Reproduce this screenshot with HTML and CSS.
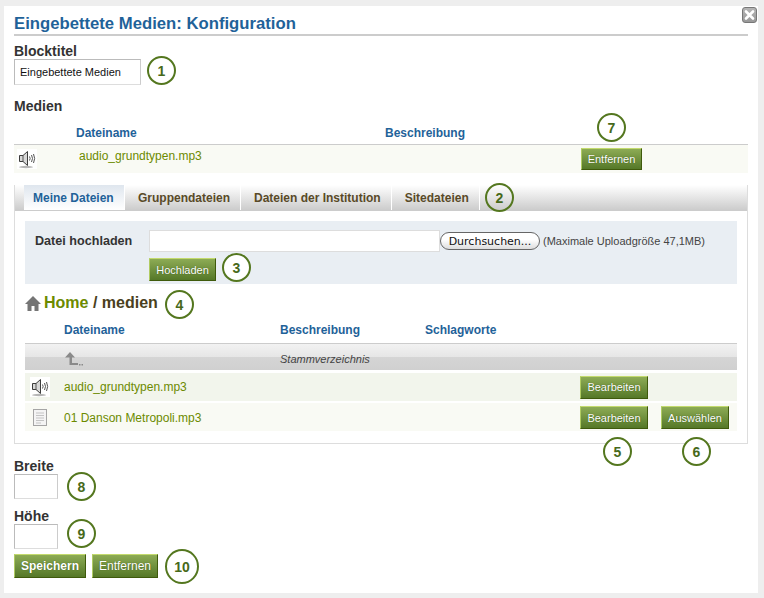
FILE: index.html
```html
<!DOCTYPE html>
<html lang="de">

<head>
	<meta charset="UTF-8" />
	<title>Eingebettete Medien: Konfiguration</title>
	<link rel="stylesheet" href="styles.css">
</head>

<body>
	<div class="panel">
		<a class="close" href="#">
			<svg width="15" height="16" viewBox="0 0 15 16">
				<path d="M4 4.500 11 11.500M11 4.500 4 11.500" stroke="#fff" stroke-width="2.600" stroke-linecap="round" />
			</svg>
		</a>

		<h1>Eingebettete Medien: Konfiguration</h1>

		<label class="fieldLabel labelTitle">Blocktitel</label>
		<input class="textInput titleInput" type="text" value="Eingebettete Medien" />

		<h3 class="mediaHeading">Medien</h3>
		<div class="row headRow selectedHead">
			<span>Dateiname</span>
			<span>Beschreibung</span>
		</div>
		<div class="row selectedRow">
			<svg width="20" height="20" viewBox="0 0 20 20">
				<use href="#speakerIcon" />
			</svg>
			<a class="fileLink" href="#">audio_grundtypen.mp3</a>
			<button class="btn removeBtn" type="button">Entfernen</button>
		</div>

		<div class="browser">
			<ul class="tabs">
				<li class="tab active">Meine Dateien</li>
				<li class="tab">Gruppendateien</li>
				<li class="tab">Dateien der Institution</li>
				<li class="tab">Sitedateien</li>
			</ul>

			<div class="upload">
				<div class="uploadLine">
					<span class="uploadLabel">Datei hochladen</span>
					<input class="fileName" type="text" />
					<button class="browse" type="button">Durchsuchen...</button>
					<span class="maxSize">(Maximale Uploadgröße 47,1MB)</span>
				</div>
				<button class="btn uploadBtn" type="button">Hochladen</button>
			</div>

			<div class="crumbs">
				<svg width="16" height="15" viewBox="0 0 16 15">
					<path d="M8 0 16 8H13.500V15H9.500V10H6.500V15H2.500V8H0Z" fill="#757575" />
				</svg>
				<span><a href="#">Home</a> / medien</span>
			</div>

			<div class="row headRow filesHead">
				<span>Dateiname</span>
				<span>Beschreibung</span>
				<span>Schlagworte</span>
			</div>
			<div class="row parentRow">
				<svg width="18" height="14" viewBox="0 0 18 14">
					<path d="M5 0 10 5.500H7V11H13V13H4.500V5.500H0Z" fill="#8a8a8a" />
					<path d="M14 12h1.500v1.500H14ZM16.500 12H18v1.500h-1.500Z" fill="#8a8a8a" />
				</svg>
				<em>Stammverzeichnis</em>
			</div>
			<div class="row fileRow odd">
				<svg width="20" height="20" viewBox="0 0 20 20">
					<use href="#speakerIcon" />
				</svg>
				<a class="fileLink" href="#">audio_grundtypen.mp3</a>
				<button class="btn editBtn" type="button">Bearbeiten</button>
			</div>
			<div class="row fileRow even">
				<svg width="20" height="20" viewBox="0 0 20 20">
					<rect x="3.500" y="1.500" width="13" height="16" fill="#f4f4f4" stroke="#a5a5a5" />
					<path d="M6 5h8M6 7.500h8M6 10h8M6 12.500h8M6 15h5" stroke="#c4c4c4" />
				</svg>
				<a class="fileLink" href="#">01 Danson Metropoli.mp3</a>
				<button class="btn editBtn" type="button">Bearbeiten</button>
				<button class="btn selectBtn" type="button">Auswählen</button>
			</div>
		</div>

		<label class="fieldLabel labelWidth">Breite</label>
		<input class="textInput sizeInput" type="text" />
		<label class="fieldLabel labelHeight">Höhe</label>
		<input class="textInput sizeInput" type="text" />

		<div class="actions">
			<button class="btn strong" type="button">Speichern</button>
			<button class="btn" type="button">Entfernen</button>
		</div>

		<span class="mark m1">1</span>
		<span class="mark m2">2</span>
		<span class="mark m3">3</span>
		<span class="mark m4">4</span>
		<span class="mark m5">5</span>
		<span class="mark m6">6</span>
		<span class="mark m7">7</span>
		<span class="mark m8">8</span>
		<span class="mark m9">9</span>
		<span class="mark m10">10</span>
	</div>

	<svg width="0" height="0" class="defs">
		<defs>
			<g id="speakerIcon">
				<rect width="20" height="20" fill="#fff" />
				<ellipse cx="9" cy="18" rx="7" ry="1.200" fill="#b5b5b5" />
				<path d="M2.500 6.500H6L10.500 2.500V16.500L6 12.500H2.500Z" fill="#d8d8d8" stroke="#3c3c3c" />
				<path d="M6 6.500V12.500" stroke="#555" />
				<path d="M12.500 7.500Q13.800 9.500 12.500 11.500M14.500 6Q16.500 9.500 14.500 13M16.500 5Q18.800 9.500 16.500 14" fill="none" stroke="#555" />
			</g>
		</defs>
	</svg>
</body>

</html>
```

FILE: styles.css
```css
* {
	box-sizing: border-box;
}

body {
	margin: 0;
	background: #eee;
	font-family: "Liberation Sans", Arial, sans-serif;
	font-size: 11px;
	color: #333;
}

.defs {
	position: absolute;
}

.panel {
	position: relative;
	width: 754px;
	height: 587px;
	margin: 6px 0 0 4px;
	padding: 0 10px;
	background: #fff;
}

.close {
	position: absolute;
	top: 1px;
	right: 1px;
	width: 15px;
	height: 16px;
	border: 1px solid #777;
	border-radius: 3px;
	background: linear-gradient(#b5b5b5, #999);
	display: flex;
	align-items: center;
	justify-content: center;
}

.close svg {
	flex: none;
}

h1 {
	margin: 0;
	height: 30px;
	padding-top: 9px;
	border-bottom: 2px solid #ccc;
	font-size: 16.700px;
	line-height: 18px;
	color: #1f6299;
}

.fieldLabel {
	display: block;
	font-size: 14px;
	font-weight: bold;
	line-height: 16px;
	color: #333;
}

.labelTitle {
	margin-top: 7px;
}

.textInput {
	display: block;
	border: 1px solid #bbb;
	border-bottom-color: #ddd;
	border-right-color: #ccc;
	background: #fff;
	padding: 0 5px;
	font-family: inherit;
	font-size: 11px;
	color: #111;
}

.titleInput {
	width: 127px;
	height: 26px;
}

.mediaHeading {
	margin: 13px 0 0;
	font-size: 14px;
	line-height: 16px;
}

.row {
	display: flex;
	align-items: center;
}

.headRow {
	font-size: 12px;
	font-weight: bold;
	color: #1f6299;
	border-bottom: 1px solid #ccc;
}

.selectedHead {
	height: 24px;
	margin-top: 7px;
	padding-left: 62px;
}

.selectedHead span:first-child {
	width: 309px;
}

.selectedRow {
	height: 28px;
	background: #f9faf4;
	padding-left: 3px;
	font-size: 12px;
}

.selectedRow .fileLink {
	width: 502px;
	margin: -6px 0 0 42px;
}

.fileLink {
	color: #6c8a00;
	text-decoration: none;
}

.btn {
	height: 22px;
	padding: 0 6px;
	border: 1px solid;
	border-color: #c3da6d #3f5a0c #3f5a0c #b0cb62;
	border-radius: 0;
	background: linear-gradient(#8dab55, #557828);
	color: #fff;
	font-family: inherit;
	font-size: 11px;
	text-shadow: 0 0 1px #334f10;
}

.removeBtn {
	width: 61px;
	padding: 0;
}

.browser {
	height: 259px;
	margin-top: 12px;
	border: 1px solid #ddd;
	border-top: 0;
}

.tabs {
	display: flex;
	height: 26px;
	margin: 0;
	padding: 0 0 0 9px;
	list-style: none;
	background: linear-gradient(#fff, #ccc);
	border-bottom: 1px solid #ccc;
}

.tab {
	display: flex;
	align-items: center;
	height: 25px;
	padding: 0 10px 0 13px;
	border-right: 1px solid #fff;
	font-size: 12px;
	font-weight: bold;
	color: #594a28;
}

.tab.active {
	width: 101px;
	padding: 0 9px;
	color: #1f6299;
	background: linear-gradient(#dfe6ee, #fff);
}

.upload {
	height: 63px;
	margin: 10px 10px 0;
	padding: 9px 0 0 10px;
	background: #e9eef3;
}

.uploadLine {
	display: flex;
	align-items: center;
	height: 22px;
}

.uploadLabel {
	width: 114px;
	font-size: 12.600px;
	font-weight: bold;
	color: #333;
}

.fileName {
	width: 291px;
	height: 22px;
	border: 1px solid #ddd;
	background: #fff;
}

.browse {
	width: 100px;
	height: 18px;
	padding: 0;
	border: 1px solid #666;
	border-radius: 9px;
	background: linear-gradient(#fff 40%, #ddd);
	font-family: "DejaVu Sans", sans-serif;
	font-size: 11px;
	color: #111;
}

.maxSize {
	margin-left: 3px;
	font-size: 11px;
	color: #444;
}

.uploadBtn {
	display: block;
	width: 67px;
	height: 23px;
	margin: 6px 0 0 114px;
	padding: 0;
}

.crumbs {
	display: flex;
	align-items: center;
	gap: 3px;
	height: 24px;
	margin: 7px 0 0 10px;
	font-size: 16px;
	font-weight: bold;
	color: #4a3f20;
}

.crumbs a {
	color: #6c8a00;
	text-decoration: none;
}

.filesHead {
	height: 25px;
	margin: 4px 10px 0;
	padding: 0 0 2px 39px;
}

.filesHead span:nth-child(1) {
	width: 216px;
}

.filesHead span:nth-child(2) {
	width: 145px;
}

.parentRow {
	height: 26px;
	margin: 0 10px 3px;
	padding-left: 40px;
	background: linear-gradient(#f2f2f2 0, #e6e6e6 50%, #d5d5d5 50%, #d0d0d0 100%);
}

.parentRow svg {
	width: 215px;
	flex: none;
	margin-top: 4px;
	padding-right: 197px;
}

.parentRow em {
	margin-top: 4px;
	font-size: 11px;
	color: #444;
}

.fileRow {
	height: 28px;
	margin: 0 10px;
	padding-left: 5px;
	font-size: 12px;
}

.fileRow .fileLink {
	width: 516px;
	margin-left: 14px;
}

.odd {
	background: #f2f5ec;
	margin-bottom: 2px;
}

.even {
	background: #f9faf4;
	padding-top: 1px;
}

.editBtn,
.selectBtn {
	width: 68px;
	height: 23px;
	padding: 0;
}

.selectBtn {
	margin-left: 13px;
}

.labelWidth {
	margin-top: 14px;
}

.labelHeight {
	margin-top: 9px;
}

.sizeInput {
	width: 44px;
	height: 25px;
}

.actions {
	display: flex;
	gap: 6px;
	margin-top: 5px;
}

.actions .btn {
	height: 24px;
	font-size: 12px;
}

.actions .strong {
	width: 72px;
	font-weight: bold;
}

.actions .btn:last-child {
	width: 66px;
}

.mark {
	position: absolute;
	width: 29px;
	height: 29px;
	border: 2px solid #54771f;
	border-radius: 50%;
	background: #fff;
	display: flex;
	align-items: center;
	justify-content: center;
	font-size: 14px;
	font-weight: bold;
	color: #47691a;
}

.m1 { left: 143px; top: 50px; }
.m2 { left: 481px; top: 177px; background: transparent; }
.m3 { left: 218px; top: 247px; }
.m4 { left: 161px; top: 284px; }
.m5 { left: 599px; top: 431px; }
.m6 { left: 678px; top: 431px; }
.m7 { left: 593px; top: 107px; }
.m8 { left: 63px; top: 466px; }
.m9 { left: 63px; top: 513px; }
.m10 { left: 161px; top: 543px; width: 34px; height: 35px; }
```
